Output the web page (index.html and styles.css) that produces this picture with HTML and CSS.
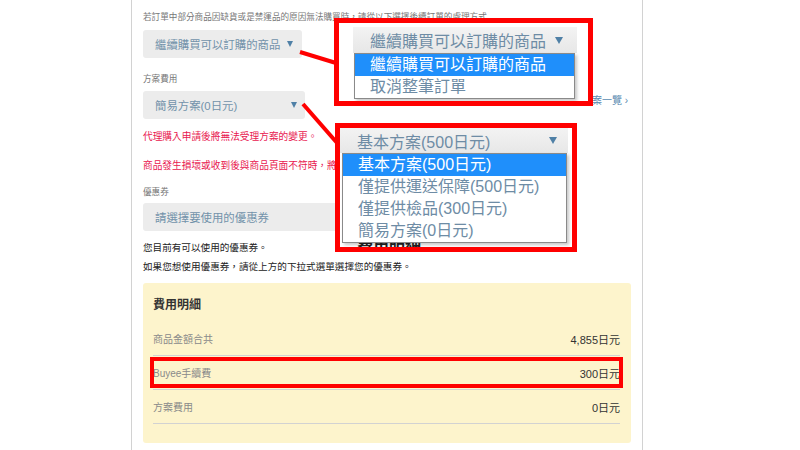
FILE: index.html
```html
<!DOCTYPE html>
<html lang="zh-Hant">
<head>
<meta charset="utf-8">
<title>購買設定</title>
<link rel="stylesheet" href="styles.css">
</head>
<body>
<div class="page">
  <main class="panel">
    <p class="hint">若訂單中部分商品因缺貨或是禁運品的原因無法購買時，請從以下選擇後續訂單的處理方式</p>
    <div class="select s1"><span>繼續購買可以訂購的商品</span><i class="arrow"></i></div>

    <p class="label">方案費用</p>
    <div class="plan-row">
      <div class="select s2"><span>簡易方案(0日元)</span><i class="arrow"></i></div>
      <a class="plan-link">查看各方案一覽 ›</a>
    </div>

    <p class="warn w1">代理購入申請後將無法受理方案的變更。</p>
    <p class="warn w2">商品發生損壞或收到後與商品頁面不符時，將依方案內容處理。</p>

    <p class="label l-coupon">優惠券</p>
    <div class="select s3"><span>請選擇要使用的優惠券</span></div>

    <p class="note">您目前有可以使用的優惠券。<br>如果您想使用優惠券，請從上方的下拉式選單選擇您的優惠券。</p>

    <section class="fees">
      <h3>費用明細</h3>
      <div class="rows">
        <div class="row"><span>商品金額合共</span><b>4,855日元</b></div>
        <div class="row"><span>Buyee手續費</span><b>300日元</b><i class="mark"></i></div>
        <div class="row"><span>方案費用</span><b>0日元</b></div>
      </div>
    </section>
  </main>

  <svg class="connectors" width="800" height="450" viewBox="0 0 800 450">
    <line x1="300" y1="52" x2="336" y2="63" stroke="#ff0000" stroke-width="4"/>
    <line x1="303" y1="104" x2="338" y2="144" stroke="#ff0000" stroke-width="4"/>
  </svg>

  <div class="callout ca">
    <div class="bigselect bs-a"><span>繼續購買可以訂購的商品</span><i class="bigarrow"></i></div>
    <ul class="dropdown dd-a">
      <li class="on">繼續購買可以訂購的商品</li>
      <li>取消整筆訂單</li>
    </ul>
  </div>

  <div class="callout cb">
    <div class="bigselect bs-b"><span>基本方案(500日元)</span><i class="bigarrow"></i></div>
    <ul class="dropdown dd-b">
      <li class="on">基本方案(500日元)</li>
      <li>僅提供運送保障(500日元)</li>
      <li>僅提供檢品(300日元)</li>
      <li>簡易方案(0日元)</li>
    </ul>
    <div class="under-title">費用明細</div>
  </div>
</div>
</body>
</html>
```

FILE: styles.css
```css
* { box-sizing: border-box; }
html, body { margin: 0; padding: 0; background: #fff; }
body {
  font-family: "Liberation Sans", "Noto Sans CJK TC", sans-serif;
  color: #222;
}
.page {
  position: relative;
  width: 800px;
  height: 450px;
  overflow: hidden;
}
.panel {
  margin-left: 131px;
  width: 512px;
  min-height: 450px;
  border-left: 1px solid #d2d2d2;
  border-right: 1px solid #d2d2d2;
  padding: 11px 11px 0;
}
.hint {
  margin: 0;
  font-size: 8.6px;
  line-height: 12px;
  color: #777;
  white-space: nowrap;
}
.select {
  display: flex;
  align-items: center;
  justify-content: space-between;
  height: 28px;
  background: #ececec;
  border-radius: 3px;
  padding: 0 9px 0 12px;
  font-size: 11.4px;
  color: #7292aa;
}
.arrow {
  width: 0;
  height: 0;
  border-left: 3px solid transparent;
  border-right: 3px solid transparent;
  border-top: 6px solid #4f80a6;
}
.s1 { margin-top: 7px; width: 159px; }
.label {
  margin: 15px 0 0;
  font-size: 8.6px;
  line-height: 12px;
  color: #777;
}
.plan-row {
  display: flex;
  justify-content: space-between;
  align-items: flex-start;
  margin-top: 6px;
}
.s2 { width: 162px; padding-right: 8px; }
.plan-link {
  margin-top: 3px;
  margin-right: 3px;
  font-size: 10px;
  line-height: 14px;
  color: #5a8ab0;
}
.warn {
  margin: 11px 0 0;
  font-size: 9.7px;
  line-height: 14px;
  color: #e8174f;
  white-space: nowrap;
}
.w2 { margin-top: 15px; }
.l-coupon { margin-top: 13px; }
.s3 { margin-top: 5px; width: 300px; }
.note {
  margin: 7px 0 0;
  font-size: 9.6px;
  line-height: 19px;
  color: #222;
}
.fees {
  margin-top: 7px;
  background: #fdf4cc;
  border-radius: 3px;
  padding: 14px 11px 19px 10px;
}
.fees h3 {
  margin: 0;
  font-size: 12px;
  line-height: 16px;
  font-weight: bold;
  color: #333;
}
.rows { margin-top: 9px; }
.row {
  position: relative;
  display: flex;
  justify-content: space-between;
  align-items: center;
  height: 34px;
  border-bottom: 1px solid #d2d2d2;
}
.row span { font-size: 10px; color: #8a8a8a; }
.row b { font-weight: normal; font-size: 11px; color: #333; }
.mark {
  position: absolute;
  top: 1px;
  bottom: 1px;
  left: -3px;
  right: -3px;
  border: 4px solid #ff0000;
}

/* callout annotations */
.connectors {
  position: absolute;
  left: 0;
  top: 0;
  pointer-events: none;
}
.callout {
  position: absolute;
  border: 5px solid #ff0000;
  background: #fff;
  overflow: hidden;
}
.ca { left: 334px; top: 18px; width: 259px; height: 88px; }
.cb { left: 335px; top: 123px; width: 242px; height: 129px; }
.bigselect {
  display: flex;
  align-items: center;
  justify-content: space-between;
  background: linear-gradient(#f3f3f3, #e7e7e7);
  font-size: 16px;
  color: #6e8ca5;
  padding-left: 17px;
}
.bs-a { margin: 4px 0 0 14px; width: 224px; height: 26px; padding-right: 14px; }
.bs-b { width: 228px; height: 25px; padding-right: 11px; }
.bigarrow {
  width: 0;
  height: 0;
  border-left: 4px solid transparent;
  border-right: 4px solid transparent;
  border-top: 7px solid #4f80a6;
}
.dropdown {
  position: relative;
  z-index: 1;
  list-style: none;
  margin: 0;
  padding: 0;
  background: #fff;
  border: 1px solid #8a8a8a;
  box-shadow: 2px 2px 3px rgba(0, 0, 0, 0.22);
}
.dropdown li {
  height: 22px;
  line-height: 22px;
  font-size: 16px;
  color: #6e8ca5;
  padding-left: 15px;
  white-space: nowrap;
}
.dropdown li.on { background: #1f8ffb; color: #fff; }
.dd-a { margin-left: 15px; width: 221px; }
.dd-b { margin-left: 2px; width: 225px; }
.under-title {
  margin: -4px 0 0 17px;
  font-size: 16px;
  line-height: 16px;
  font-weight: bold;
  color: #222;
}
```
